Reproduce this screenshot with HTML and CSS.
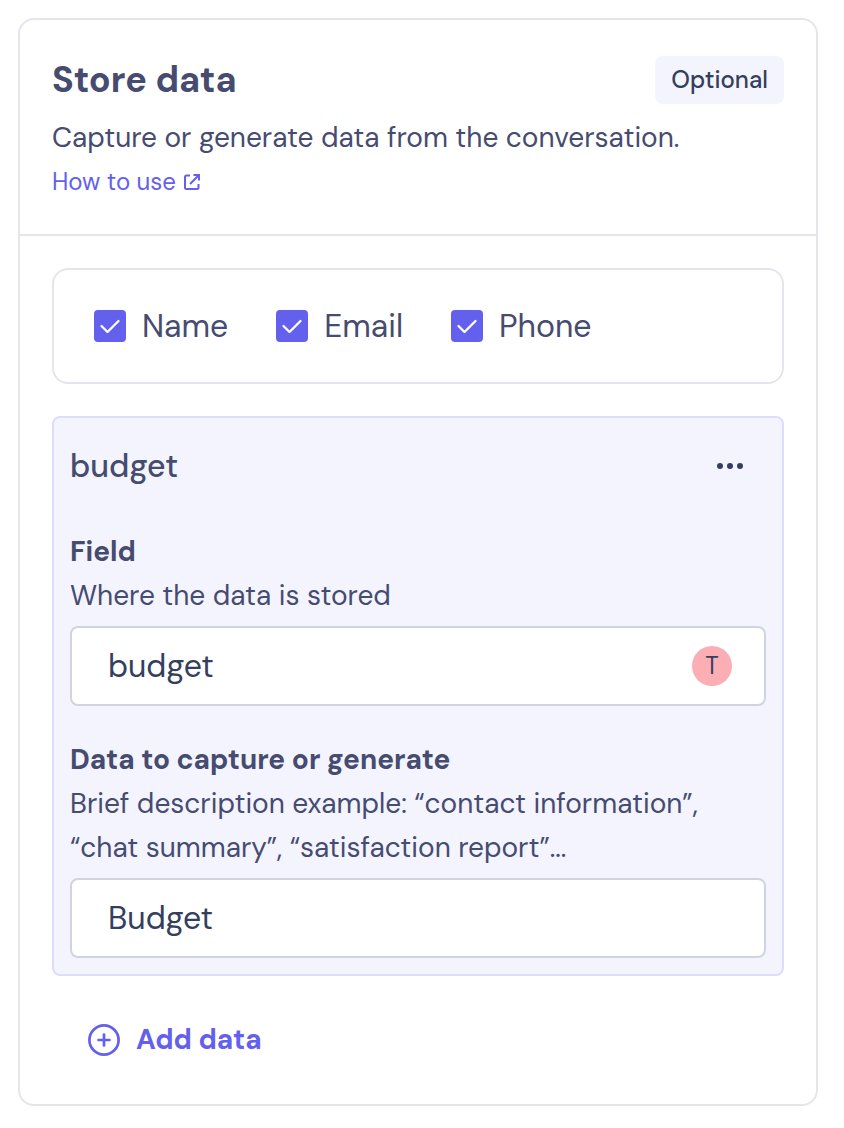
FILE: index.html
```html
<!DOCTYPE html>
<html lang="en">
<head>
    <meta charset="UTF-8">
    <meta name="viewport" content="width=device-width, initial-scale=1.0">
    <title>Store data</title>
    <link rel="stylesheet" href="styles.css">
</head>
<body>
    <section class="card">
        <header class="card-header">
            <div class="title-row">
                <h1>Store data</h1>
                <span class="badge">Optional</span>
            </div>
            <p class="text">Capture or generate data from the conversation.</p>
            <a class="help-link" href="#">
                How to use
                <svg width="16" height="16" viewBox="0 0 16 16" fill="none" stroke="currentColor" stroke-width="2">
                    <path d="M6 1.5H2.5A1.5 1.5 0 0 0 1 3v10.5A1.5 1.5 0 0 0 2.500 15H13a1.500 1.500 0 0 0 1.500-1.500V10"/>
                    <path d="M9.500 1H15v5.500M15 1L6 10"/>
                </svg>
            </a>
        </header>

        <div class="card-body">
            <div class="checks">
                <label class="check">
                    <span class="box">
                        <input type="checkbox" checked>
                        <svg width="32" height="32" viewBox="0 0 32 32"><path d="M7.500 16l6 6L24.500 11"/></svg>
                    </span>
                    Name
                </label>
                <label class="check">
                    <span class="box">
                        <input type="checkbox" checked>
                        <svg width="32" height="32" viewBox="0 0 32 32"><path d="M7.500 16l6 6L24.500 11"/></svg>
                    </span>
                    Email
                </label>
                <label class="check">
                    <span class="box">
                        <input type="checkbox" checked>
                        <svg width="32" height="32" viewBox="0 0 32 32"><path d="M7.500 16l6 6L24.500 11"/></svg>
                    </span>
                    Phone
                </label>
            </div>

            <div class="panel">
                <div class="panel-header">
                    <h2>budget</h2>
                    <button class="menu-btn" type="button" aria-label="More options">
                        <svg width="28" height="8" viewBox="0 0 28 8" fill="currentColor">
                            <circle cx="4" cy="4" r="3"/>
                            <circle cx="14" cy="4" r="3"/>
                            <circle cx="24" cy="4" r="3"/>
                        </svg>
                    </button>
                </div>

                <div class="field">
                    <label class="label" for="field">Field</label>
                    <p class="text">Where the data is stored</p>
                    <div class="input-box">
                        <input type="text" id="field" value="budget">
                        <span class="type">T</span>
                    </div>
                </div>

                <div class="field">
                    <label class="label" for="data">Data to capture or generate</label>
                    <p class="text">Brief description example: “contact information”, “chat summary”, “satisfaction report”...</p>
                    <div class="input-box">
                        <input type="text" id="data" value="Budget">
                    </div>
                </div>
            </div>

            <button class="add-btn" type="button">
                <svg width="32" height="32" viewBox="0 0 32 32" fill="none" stroke="currentColor" stroke-width="2.7" stroke-linecap="round">
                    <circle cx="16" cy="16" r="14.6"/>
                    <path d="M16 10.500v11M10.500 16h11"/>
                </svg>
                Add data
            </button>
        </div>
    </section>
</body>
</html>
```
FILE: styles.css
```css
* {
    box-sizing: border-box;
}
body {
    margin: 0;
    padding: 18px 26px 22px 18px;
    background: #fff;
    color: #464b70;
    font-family: "DM Sans", "Open Sans", sans-serif;
    font-size: 28px;
    line-height: 44px;
}
h1, h2, p {
    margin: 0;
}
button, input {
    font: inherit;
    color: inherit;
}
button {
    padding: 0;
    border: none;
    background: none;
    cursor: pointer;
}
.card {
    border: 2px solid #e5e5ed;
    border-radius: 16px;
}
.card-header {
    padding: 36px 32px 30px;
    border-bottom: 2px solid #e5e5ed;
}
.title-row {
    display: flex;
    align-items: center;
    justify-content: space-between;
    margin-bottom: 12px;
}
h1 {
    font-size: 36px;
    line-height: 48px;
    font-weight: 700;
}
.badge {
    padding: 0 16px;
    border-radius: 8px;
    background: #f4f4ff;
    color: #343f60;
    font-size: 24px;
    line-height: 48px;
    font-weight: 500;
}
.help-link {
    display: flex;
    align-items: center;
    gap: 8px;
    width: fit-content;
    color: #6360ee;
    font-size: 24px;
    text-decoration: none;
}
.card-body {
    padding: 32px 32px 24px;
}
.checks {
    display: flex;
    flex-wrap: wrap;
    gap: 16px 48px;
    padding: 34px 40px;
    border: 2px solid #e5e5ed;
    border-radius: 16px;
    margin-bottom: 32px;
    font-size: 32px;
}
.check {
    display: flex;
    align-items: center;
    gap: 16px;
}
.box {
    display: grid;
}
.box input,
.box svg {
    grid-area: 1 / 1;
}
.box input {
    appearance: none;
    width: 32px;
    height: 32px;
    margin: 0;
    border: 2px solid #6360ee;
    border-radius: 4px;
    background: #fff;
}
.box input:checked {
    background: #6360ee;
}
.box svg {
    fill: none;
    stroke: #fff;
    stroke-width: 2.3;
    stroke-linecap: round;
    stroke-linejoin: round;
    pointer-events: none;
}
.panel {
    padding: 16px;
    border: 2px solid #dcdcff;
    border-radius: 8px;
    background: #f4f4ff;
}
.panel-header {
    display: flex;
    align-items: center;
    justify-content: space-between;
    height: 64px;
    padding-right: 22px;
}
h2 {
    font-size: 32px;
    font-weight: 500;
}
.menu-btn {
    display: flex;
    color: #343f60;
}
.field {
    margin-top: 32px;
}
.label {
    display: block;
    font-weight: 700;
}
.input-box {
    display: flex;
    align-items: center;
    height: 80px;
    margin-top: 8px;
    padding: 0 32px 0 36px;
    border: 2px solid #d1d3de;
    border-radius: 8px;
    background: #fff;
    color: #343f60;
}
.input-box input {
    flex: 1;
    min-width: 0;
    padding: 0;
    border: none;
    outline: none;
    background: none;
    font-size: 32px;
}
.type {
    width: 40px;
    border-radius: 50%;
    background: #fbafb4;
    font-size: 24px;
    line-height: 40px;
    text-align: center;
}
.add-btn {
    display: flex;
    align-items: center;
    gap: 16px;
    height: 80px;
    margin-top: 24px;
    padding: 0 36px;
    color: #6360ee;
    font-weight: 700;
}
```
